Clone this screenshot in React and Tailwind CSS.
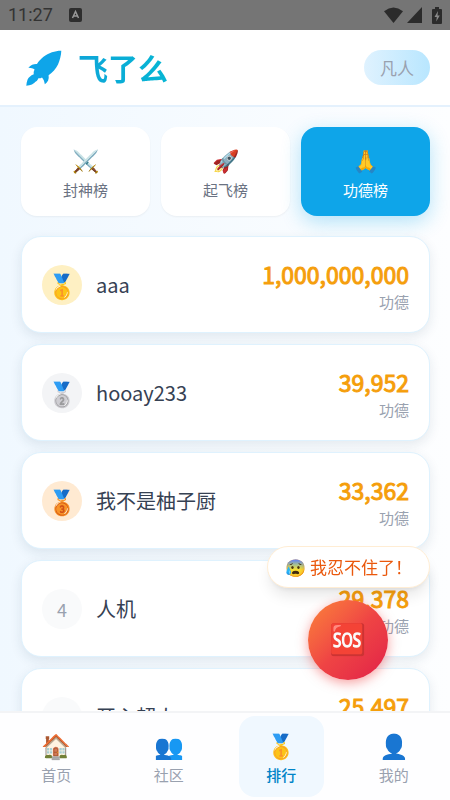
import React, { useState } from 'react';
import clsx from 'clsx';

const boards = [
  { key: 'god', icon: '⚔️', label: '封神榜' },
  { key: 'fly', icon: '🚀', label: '起飞榜' },
  { key: 'merit', icon: '🙏', label: '功德榜' },
];

const users = [
  { rank: 1, name: 'aaa', score: 1000000000 },
  { rank: 2, name: 'hooay233', score: 39952 },
  { rank: 3, name: '我不是柚子厨', score: 33362 },
  { rank: 4, name: '人机', score: 29378 },
  { rank: 5, name: '开心超人', score: 25497 },
];

const medals = {
  1: { icon: '🥇', style: 'bg-[#fef0c3]' },
  2: { icon: '🥈', style: 'bg-gray-100' },
  3: { icon: '🥉', style: 'bg-[#ffead2]' },
};

const pages = [
  { key: 'home', icon: '🏠', label: '首页' },
  { key: 'community', icon: '👥', label: '社区' },
  { key: 'rank', icon: '🥇', label: '排行' },
  { key: 'mine', icon: '👤', label: '我的' },
];

function StatusBar() {
  return (
    <div className="flex h-[30px] shrink-0 items-center justify-between bg-[#757575] px-2 text-[#333]">
      <div className="flex items-center gap-4">
        <span className="font-[Roboto,sans-serif] text-lg leading-5">11:27</span>
        <svg width="13" height="14" viewBox="0 0 13 14">
          <rect width="13" height="14" rx="2" fill="#2e2e2e" />
          <path d="M3.5 10L6.5 3.5L9.5 10M4.6 8h3.8" fill="none" stroke="#999" strokeWidth="1.5" />
        </svg>
      </div>
      <div className="flex items-center">
        <svg width="19" height="16" viewBox="0 0 19 16">
          <path d="M0 4.2Q9.5-3 19 4.2L9.5 16Z" fill="#2b2b2b" />
        </svg>
        <svg className="ml-1" width="15" height="16" viewBox="0 0 15 16">
          <path d="M15 0V16H0Z" fill="#2b2b2b" />
        </svg>
        <svg className="ml-2.5" width="10" height="17" viewBox="0 0 10 17">
          <path d="M3 0h4v2h2q1 0 1 1v13q0 1-1 1H1q-1 0-1-1V3q0-1 1-1h2z" fill="#2b2b2b" />
          <path d="M6 4L2.5 10H4.8L4.2 14.5L7.8 8.5H5.5Z" fill="#8a8a8a" />
        </svg>
      </div>
    </div>
  );
}

function Header() {
  return (
    <header className="flex h-[77px] shrink-0 items-center justify-between border-b-2 border-[#e4f1fd] bg-white pr-5 pl-[26px]">
      <div className="flex items-center gap-4">
        <svg width="36" height="36" viewBox="0 0 36 36">
          <path
            d="M35.3 .8C30 .6 22.5 3 17.5 6.7C14.8 8.8 12.5 11.3 11 14C8 13.8 5.2 14.5 2.3 17.7C4.5 17.5 7 18.3 8.6 19.4C7.7 21 7.5 22.5 7.8 24.2C4.5 25.5 2.5 27.5 1.6 29.5C.8 31.5 .5 33.5 .3 35.7C4.5 35.5 8 33.8 9.8 31.5C11.3 31 11.8 29.5 12.4 28.3C13.5 28.5 14.8 28.2 16 27.4C17.6 29.3 18.5 31.5 18.8 34.3C22 32 23.2 29.5 22.6 25.3C26.5 22.5 30 18.8 32 14.5C33.8 10.5 35.2 5.5 35.3 .8Z"
            fill="#0ea5e9"
          />
        </svg>
        <h1 className="bg-linear-to-r from-[#0ea5d8] to-[#06b6d4] bg-clip-text pb-0.5 text-3xl leading-10 font-bold text-transparent">
          飞了么
        </h1>
      </div>
      <span className="rounded-full bg-linear-to-r from-sky-100 to-sky-200 px-4 text-[17px] leading-[35px] text-gray-400">
        凡人
      </span>
    </header>
  );
}

function RankCard({ user }) {
  const medal = medals[user.rank];
  return (
    <li className="flex h-[97px] items-center rounded-[20px] border border-sky-100 bg-white px-5 shadow-[0_4px_12px_rgba(30,60,90,0.1)]">
      <span
        className={clsx(
          'flex size-10 shrink-0 items-center justify-center rounded-full',
          medal ? medal.style : 'bg-gray-50',
          medal ? 'text-2xl' : 'text-lg text-gray-400',
        )}
      >
        {medal ? medal.icon : user.rank}
      </span>
      <span className="ml-[14px] flex-1 text-xl text-gray-700">{user.name}</span>
      <div className="flex flex-col items-end pt-0.5">
        <b className="text-[23px] leading-8 font-normal text-[#f59e0b] [-webkit-text-stroke:1px_#f59e0b]">
          {user.score.toLocaleString('en-US')}
        </b>
        <span className="text-[15px] leading-6 text-gray-400">功德</span>
      </div>
    </li>
  );
}

function App() {
  const [board, setBoard] = useState('merit');
  const [page, setPage] = useState('rank');

  return (
    <div className="flex h-screen flex-col overflow-hidden bg-linear-to-r from-[#f0f8ff] to-[#fdfeff] font-['Noto_Sans_CJK_SC',sans-serif]">
      <StatusBar />
      <Header />
      <main className="min-h-0 flex-1 overflow-y-auto pt-5 pr-5 pb-5 pl-[21px] [scrollbar-width:none]">
        <div className="grid grid-cols-3 gap-[11px]">
          {boards.map((b) => (
            <button
              key={b.key}
              type="button"
              className={clsx(
                'flex h-[89px] flex-col items-center justify-center gap-[5px] rounded-2xl pt-[3px]',
                b.key === board
                  ? 'bg-[#0ea5e9] text-white shadow-[0_6px_20px_rgba(14,165,233,0.3)]'
                  : 'bg-white text-gray-500 shadow-xs',
              )}
              onClick={() => setBoard(b.key)}
            >
              <span className="text-[22px] leading-7">{b.icon}</span>
              <span className="text-[15px] leading-6">{b.label}</span>
            </button>
          ))}
        </div>
        <ol className="mt-5 flex flex-col gap-[11px]">
          {users.map((u) => (
            <RankCard key={u.rank} user={u} />
          ))}
        </ol>
      </main>

      <div className="fixed right-5 bottom-[120px] flex flex-col items-end gap-3">
        <div className="flex h-[42px] items-center gap-1 rounded-full border border-orange-100 bg-white px-[17px] text-[17px] text-[#ea580c] shadow-lg">
          <span>😰</span>
          <span>我忍不住了！</span>
        </div>
        <button
          type="button"
          aria-label="SOS"
          className="mr-[42px] flex size-20 items-center justify-center rounded-full bg-linear-to-br from-[#fb8238] via-[#ef4444] to-[#e11d48] font-['Noto_Color_Emoji',sans-serif] text-3xl shadow-[0_3px_12px_rgba(239,68,68,0.5)]"
        >
          🆘
        </button>
      </div>

      <nav className="z-10 grid h-[89px] shrink-0 grid-cols-4 border-t-2 border-gray-100 bg-[#fefeff] py-[3px]">
        {pages.map((p) => (
          <button
            key={p.key}
            type="button"
            className={clsx(
              'mx-[14px] flex flex-col items-center justify-center gap-0.5 rounded-2xl pt-[3px]',
              p.key === page ? 'bg-[#f0f8ff] font-medium text-[#0284c7]' : 'text-gray-400',
            )}
            onClick={() => setPage(p.key)}
          >
            <span className="text-2xl leading-8">{p.icon}</span>
            <span className="text-[15px] leading-6">{p.label}</span>
          </button>
        ))}
      </nav>
    </div>
  );
}

export default App;
